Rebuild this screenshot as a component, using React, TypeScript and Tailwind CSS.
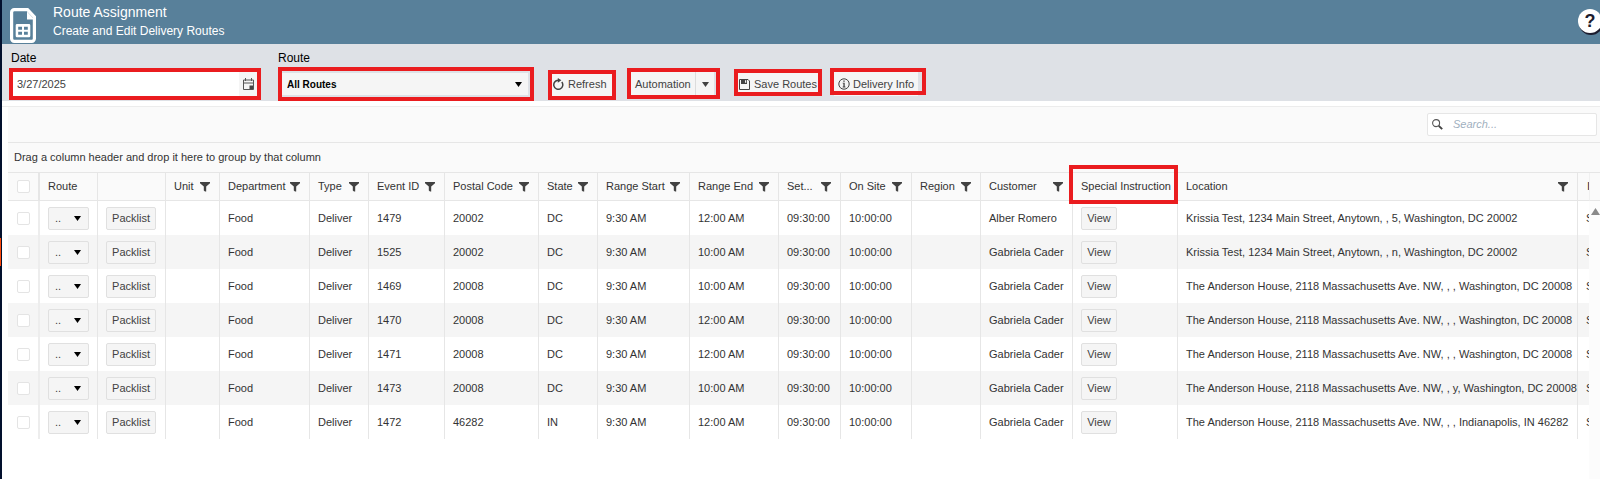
import { useState } from "react";
import type { ReactNode } from "react";

type Column = {
  key: string;
  title: string;
  width: string;
  filter?: boolean;
};

const columns: Column[] = [
  { key: "route", title: "Route", width: "w-[58px]" },
  { key: "packlist", title: "", width: "w-[68px]" },
  { key: "unit", title: "Unit", width: "w-[54px]", filter: true },
  { key: "department", title: "Department", width: "w-[90px]", filter: true },
  { key: "type", title: "Type", width: "w-[59px]", filter: true },
  { key: "eventId", title: "Event ID", width: "w-[76px]", filter: true },
  { key: "postal", title: "Postal Code", width: "w-[94px]", filter: true },
  { key: "state", title: "State", width: "w-[59px]", filter: true },
  { key: "start", title: "Range Start", width: "w-[92px]", filter: true },
  { key: "end", title: "Range End", width: "w-[89px]", filter: true },
  { key: "setup", title: "Set...", width: "w-[62px]", filter: true },
  { key: "onSite", title: "On Site", width: "w-[71px]", filter: true },
  { key: "region", title: "Region", width: "w-[69px]", filter: true },
  { key: "customer", title: "Customer", width: "w-[92px]", filter: true },
  { key: "special", title: "Special Instruction", width: "w-[105px]" },
  { key: "location", title: "Location", width: "w-auto", filter: true },
];

const anderson = "The Anderson House, 2118 Massachusetts Ave. NW, , ";
const krissia = "Krissia Test, 1234 Main Street, Anytown, , ";

const rows = [
  { id: "1479", postal: "20002", state: "DC", end: "12:00 AM", customer: "Alber Romero", location: krissia + "5, Washington, DC 20002" },
  { id: "1525", postal: "20002", state: "DC", end: "10:00 AM", customer: "Gabriela Cader", location: krissia + "n, Washington, DC 20002" },
  { id: "1469", postal: "20008", state: "DC", end: "10:00 AM", customer: "Gabriela Cader", location: anderson + ", Washington, DC 20008" },
  { id: "1470", postal: "20008", state: "DC", end: "12:00 AM", customer: "Gabriela Cader", location: anderson + ", Washington, DC 20008" },
  { id: "1471", postal: "20008", state: "DC", end: "12:00 AM", customer: "Gabriela Cader", location: anderson + ", Washington, DC 20008" },
  { id: "1473", postal: "20008", state: "DC", end: "10:00 AM", customer: "Gabriela Cader", location: anderson + "y, Washington, DC 20008" },
  { id: "1472", postal: "46282", state: "IN", end: "12:00 AM", customer: "Gabriela Cader", location: anderson + ", Indianapolis, IN 46282" },
];

/* ── Icons ── */
function SheetIcon() {
  return (
    <svg width="26" height="35" viewBox="0 0 26 35" aria-hidden="true">
      <path
        d="M4.5 1.6H17.5L24.4 8.8V30.5A2.8 2.8 0 0 1 21.5 33.4H4.5A2.8 2.8 0 0 1 1.6 30.5V4.5A2.8 2.8 0 0 1 4.5 1.6Z"
        fill="none"
        stroke="#fff"
        strokeWidth="3.2"
      />
      <path d="M17 3.5V11.5H24.5Z" fill="#fff" />
      <path
        fill="#fff"
        fillRule="evenodd"
        d="M7 16H19A1.3 1.3 0 0 1 20.3 17.3V28A1.3 1.3 0 0 1 19 29.3H7A1.3 1.3 0 0 1 5.7 28V17.3A1.3 1.3 0 0 1 7 16ZM8.2 18.7V21.7H12V18.7ZM14 18.7V21.7H17.8V18.7ZM8.2 23.8V26.8H12V23.8ZM14 23.8V26.8H17.8V23.8Z"
      />
    </svg>
  );
}

function Caret({ className = "" }: { className?: string }) {
  return (
    <svg className={className} width="7" height="5" viewBox="0 0 7 5" aria-hidden="true">
      <path d="M0 0H7L3.5 5Z" fill="currentColor" />
    </svg>
  );
}

function FilterIcon() {
  return (
    <svg width="10" height="10" viewBox="0 0 10 10" aria-hidden="true">
      <path d="M0 0H10V1.3L6.2 4.5V9.5H5L3.8 8.5V4.5L0 1.3Z" fill="#424242" />
    </svg>
  );
}

function CalendarIcon() {
  return (
    <svg width="12" height="12" viewBox="0 0 12 12" fill="none" stroke="#555" aria-hidden="true">
      <path d="M.5 2H10.5V11.5H.5ZM.5 5H10.5M2.5 0V3M8.5 0V3" />
      <path d="M6.5 7.5H10V11H6.5Z" fill="#444" stroke="none" />
    </svg>
  );
}

function RefreshIcon() {
  return (
    <svg width="11" height="12" viewBox="0 0 11 12" fill="none" aria-hidden="true">
      <path d="M8.8 4A4.5 4.5 0 1 1 5.2 2.3" stroke="#424242" strokeWidth="1.5" />
      <path d="M4.8 0L8.4 2.3L4.8 4.8Z" fill="#424242" />
    </svg>
  );
}

function SaveIcon() {
  return (
    <svg width="11" height="11" viewBox="0 0 11 11" fill="none" aria-hidden="true">
      <path d="M.5 .5H9L10.5 2V10.5H.5Z" stroke="#424242" />
      <path d="M2 .5H8V5H2Z" fill="#424242" />
      <path d="M6 1.2H7.2V3.8H6Z" fill="#f5f5f5" />
    </svg>
  );
}

function InfoIcon() {
  return (
    <svg width="12" height="12" viewBox="0 0 12 12" fill="none" aria-hidden="true">
      <circle cx="6" cy="6" r="5.2" stroke="#424242" />
      <path d="M5.3 2.4H6.7V3.8H5.3ZM4.7 4.8H6.7V8.6H7.4V9.4H4.7V8.6H5.4V5.6H4.7Z" fill="#424242" />
    </svg>
  );
}

function SearchIcon() {
  return (
    <svg width="11" height="11" viewBox="0 0 11 11" fill="none" aria-hidden="true">
      <circle cx="4.1" cy="4.1" r="3.5" stroke="#555" strokeWidth="1.1" />
      <path d="M6.8 6.8L10.2 10.2" stroke="#424242" strokeWidth="1.9" />
    </svg>
  );
}

/* Red callout frame drawn around whatever it wraps */
function Callout({ frame, className = "", children }: { frame: string; className?: string; children: ReactNode }) {
  return (
    <div className={`relative flex h-6 ${className}`}>
      {children}
      <span className={`pointer-events-none absolute border-4 border-[#ea1c1f] ${frame}`} />
    </div>
  );
}

const toolButton = "flex items-center bg-[#f5f5f5] text-[#424242] whitespace-nowrap hover:bg-[#ebebeb]";
const cellButton = "h-[23px] rounded-xs border border-[#e0e0e0] bg-[#f5f5f5] text-[#424242] hover:bg-[#ebebeb]";
const cellLine = "border-r border-[#e6e6e6]";
const checkbox = "block size-[13px] appearance-none rounded-xs border border-[#e4e4e4] bg-white checked:bg-[#58809a]";

function Toolbar() {
  const [date, setDate] = useState("3/27/2025");

  return (
    <div className="flex h-[57px] items-end bg-[#dee1e6] pb-[5px] pl-[9px]">
      <div className="w-[248px]">
        <label htmlFor="date" className="block h-[22px] text-xs text-black">
          Date
        </label>
        <Callout frame="-inset-x-0.5 -top-1 -bottom-1" className="bg-white">
          <input
            id="date"
            className="min-w-0 flex-1 bg-white px-1.5 text-[#424242] outline-none"
            value={date}
            onChange={(e) => setDate(e.target.value)}
          />
          <button className="flex w-5 items-center bg-[#f5f5f5] pl-1" aria-label="Open calendar">
            <CalendarIcon />
          </button>
        </Callout>
      </div>

      <div className="ml-[19px] w-[256px]">
        <label htmlFor="route" className="block h-[22px] text-xs text-black">
          Route
        </label>
        <Callout frame="inset-x-0 -top-[5px] -bottom-[5px]" className="items-center pl-1 pr-1.5">
          <select
            id="route"
            className="h-[22px] w-full appearance-none bg-[#f5f5f5] px-[5px] text-[10px] font-bold text-black outline-none"
          >
            <option>All Routes</option>
          </select>
          <Caret className="pointer-events-none absolute right-3 text-black" />
        </Callout>
      </div>

      <Callout frame="-top-0.5 -bottom-1 inset-x-0" className="ml-[14px] w-[68px] px-1">
        <button className={`${toolButton} w-full gap-1 pl-[1px]`}>
          <RefreshIcon />
          Refresh
        </button>
      </Callout>

      <Callout frame="-top-1 -bottom-[3px] inset-x-0" className="ml-[11px] w-[93px] pl-1 pr-1.5">
        <button className={`${toolButton} flex-1 pl-1`}>Automation</button>
        <button
          className={`${toolButton} w-[19px] justify-center border-l border-[#dcdcdc]`}
          aria-label="Automation options"
        >
          <Caret />
        </button>
      </Callout>

      <Callout frame="-top-[3px] bottom-0 inset-x-0" className="ml-[14px] w-[88px] px-1">
        <button className={`${toolButton} w-full gap-1 pl-[1px]`}>
          <SaveIcon />
          Save Routes
        </button>
      </Callout>

      <Callout frame="-top-1 bottom-[1px] inset-x-0" className="ml-2 w-[96px] pl-1 pr-2">
        <button className={`${toolButton} w-full gap-[3px] pl-1`}>
          <InfoIcon />
          Delivery Info
        </button>
      </Callout>
    </div>
  );
}

function RoutesTable() {
  return (
    <table className="w-full table-fixed border-separate border-spacing-0 text-left">
      <thead>
        <tr className="h-7 bg-[#fafafa]">
          <th className="w-8 border-r-2 border-b border-[#e6e6e6] pl-[9px]">
            <input type="checkbox" aria-label="Select all" className={checkbox} />
          </th>
          {columns.map((c) => (
            <th
              key={c.key}
              className={`relative border-b pr-[9px] pl-2 font-normal whitespace-nowrap ${cellLine} ${c.width}`}
            >
              <div className="flex items-center justify-between">
                {c.title}
                {c.filter && <FilterIcon />}
              </div>
              {c.key === "special" && (
                <span className="pointer-events-none absolute -top-2 -right-[1px] -bottom-1 -left-1 border-4 border-[#ea1c1f]" />
              )}
            </th>
          ))}
          <th className="w-[11px] overflow-hidden border-b border-[#e6e6e6] pl-[9px] font-normal">I</th>
        </tr>
      </thead>
      <tbody>
        {rows.map((r) => (
          <tr key={r.id} className="h-[34px] whitespace-nowrap even:bg-[#f5f5f5] [&>td]:pl-2">
            <td className="border-r-2 border-[#ededed]">
              <input type="checkbox" aria-label={`Select ${r.id}`} className={`${checkbox} ml-px`} />
            </td>
            <td className={cellLine}>
              <div className="relative flex w-[41px] items-center">
                <select aria-label={`Route for ${r.id}`} className={`${cellButton} w-full appearance-none pl-1.5`}>
                  <option>..</option>
                </select>
                <Caret className="pointer-events-none absolute right-2 text-black" />
              </div>
            </td>
            <td className={cellLine}>
              <button className={`${cellButton} w-[50px]`}>Packlist</button>
            </td>
            <td className={cellLine} />
            <td className={cellLine}>Food</td>
            <td className={cellLine}>Deliver</td>
            <td className={cellLine}>{r.id}</td>
            <td className={cellLine}>{r.postal}</td>
            <td className={cellLine}>{r.state}</td>
            <td className={cellLine}>9:30 AM</td>
            <td className={cellLine}>{r.end}</td>
            <td className={cellLine}>09:30:00</td>
            <td className={cellLine}>10:00:00</td>
            <td className={cellLine} />
            <td className={cellLine}>{r.customer}</td>
            <td className={cellLine}>
              <button className={`${cellButton} w-9`}>View</button>
            </td>
            <td className={cellLine}>{r.location}</td>
            <td className="overflow-hidden">S</td>
          </tr>
        ))}
      </tbody>
    </table>
  );
}

export default function App() {
  return (
    <div className="flex min-h-screen bg-white font-['Liberation_Sans',Arial,sans-serif] text-[11px] text-[#333]">
      {/* Edge of the side menu, with the active entry */}
      <div className="w-0.5 shrink-0 bg-[#02102d] pt-[238px]">
        <div className="h-7 w-px bg-[#ff4a0a]" />
      </div>

      <div className="flex min-w-0 flex-1 flex-col">
        <header className="flex h-11 items-start justify-between overflow-hidden bg-[#58809a] pl-2 text-white">
          <div className="flex">
            <div className="pt-2">
              <SheetIcon />
            </div>
            <div className="ml-[17px] pt-0.5">
              <h1 className="text-sm leading-5">Route Assignment</h1>
              <p className="text-xs leading-[18px]">Create and Edit Delivery Routes</p>
            </div>
          </div>
          <button
            className="mt-[9px] -mr-0.5 size-6 rounded-full bg-white text-lg leading-6 font-bold text-[#1c1c2e] shadow-[1px_2px_0_#1c1c2e]"
            aria-label="Help"
          >
            ?
          </button>
        </header>

        <Toolbar />

        <main className="mt-[5px] flex flex-1 flex-col border-t border-[#ececec] pl-1.5">
          <div className="flex h-9 items-center justify-end border-b border-[#e6e6e6] bg-[#fafafa] pr-[3px]">
            <label className="flex h-[23px] w-[170px] items-center gap-2.5 rounded-xs border border-[#e6e6e6] bg-white pl-1">
              <SearchIcon />
              <input
                type="search"
                aria-label="Search"
                placeholder="Search..."
                className="min-w-0 flex-1 italic outline-none placeholder:text-[#9fb0c0]"
              />
            </label>
          </div>
          <p className="flex h-[30px] items-center border-b border-[#e6e6e6] bg-[#fafafa] pl-1.5">
            Drag a column header and drop it here to group by that column
          </p>

          <div className="flex flex-1">
            <div className="min-w-0 flex-1">
              <RoutesTable />
            </div>
            <div className="w-[11px] shrink-0 bg-[#fcfcfc]">
              <div className="h-7 border-b border-l border-[#e6e6e6] border-l-[#f0f0f0] bg-[#fafafa]" />
              <svg className="mt-[7px] ml-0.5" width="9" height="7" viewBox="0 0 9 7" aria-hidden="true">
                <path d="M4.5 0L9 7H0Z" fill="#8a8a8a" />
              </svg>
            </div>
          </div>
        </main>
      </div>
    </div>
  );
}
